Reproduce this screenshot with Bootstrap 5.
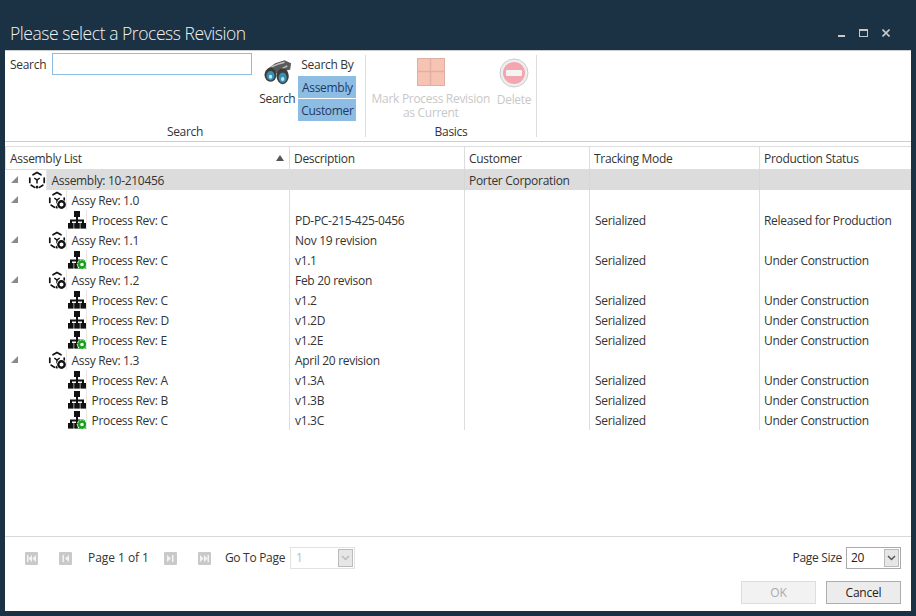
<!DOCTYPE html>
<html lang="en">
<head>
<meta charset="utf-8">
<title>Please select a Process Revision</title>
<link href="https://cdn.jsdelivr.net/npm/bootstrap@5.3.0/dist/css/bootstrap.min.css" rel="stylesheet">
<style>
html,body{height:100%;margin:0}
body{background:#1a3244;font-family:"Open Sans","Noto Sans",sans-serif;font-size:12px;color:#333;overflow:hidden}
.frame{width:916px;height:616px;padding:0 5px 5px}
.titlebar{height:50px;color:#f2f2f2;padding:20px 0 0 5px}
.titlebar h1{font-size:17.5px;font-weight:300;line-height:26px;margin:0;letter-spacing:-.45px}
.winbtns{gap:14px;padding:9px 21px 0 0}
.panel{width:906px;height:561px;background:#fff;border-top:1px solid #ccc}
.ribbon{height:91px;border-bottom:1px solid #ccc;letter-spacing:-.3px}
.sec{height:82px;margin-top:4px;border-right:1px solid #ddd}
.sec1{width:361px}.sec2{width:171px}
.secbody{height:70px;flex:none}
.seclabel{line-height:12px;text-align:center;flex:none;padding-top:1px}
.srchwrap{padding:1px 0 0 5px}
.srch{width:200px;height:22px;border:1px solid #8cbde0;background:#fff;padding:0 4px;margin:-3px 0 0 6px;font:inherit}
.srch:focus{outline:0}
.binwrap{margin-left:7px}
.binocs{margin-top:5px;margin-left:2px}
.bintext{margin-top:5px}
.bywrap{margin-left:3px;padding-top:1px}
.bytitle{margin-bottom:2px}
.toggle{background:#8dbde3;color:#1d3a63;width:58px;height:22px;line-height:24px;text-align:center;margin-bottom:1px}
.muted-label{color:#c8c8c8;line-height:14px;text-align:center}
.marklabel{width:120px}
.basicsbody{padding-top:3px;gap:6px}
.bigicon{margin-bottom:6px}
.delicon{margin-bottom:5px}
.gridarea{height:395px}
.grid{width:906px;table-layout:fixed;border-collapse:collapse;margin:4px 0 0 0;letter-spacing:-.3px}
.c1{width:284px}.c2{width:175px}.c3{width:125px}.c4{width:170px}
.grid th{height:23px;font-weight:400;border:1px solid #ddd;padding:2px 4px 0;background:#fff;position:relative;color:#333}
.grid td{height:20px;padding:2px 5px 0;border-right:1px solid #ddd;white-space:nowrap;line-height:18px;vertical-align:middle}
.grid td.treecell{padding:0}
.grid td:nth-child(3),.grid td:nth-child(5){padding-left:4px}
.grid td:last-child,.grid th:last-child{border-right:0}
.grid tr.sel td:not(.treecell){background:#dcdcdc;border-right-color:#d6d6d6}
.grid tr.sel .lbl{background:#dcdcdc}
.sortup{position:absolute;right:5px;top:8px;width:0;height:0;border:4px solid transparent;border-top:0;border-bottom:6px solid #555}
.tw{width:7px;height:7px;flex:none;margin-left:5px}
.cellin{height:20px;white-space:nowrap}
.ico{flex:none;display:block;box-sizing:content-box}
.icell{height:20px;border-right:1px solid #e6e6e6;flex:none;display:flex;align-items:center}
.i0{margin-left:10px}.i1{margin-left:30px}.i2{margin-left:62px}
.lbl{flex:1 1 auto;height:20px;padding:2px 0 0 5px;line-height:18px}
.pager{height:75px;border-top:1px solid #d8d8d8;letter-spacing:-.3px}
.pagerow{height:41px;padding:0 10px 0 20px}
.pg{width:13px;height:13px;display:block;flex:none;margin-top:1px}
.m16{margin-right:16px}.m15{margin-right:15px}.m21{margin-right:21px}.m14{margin-right:14px}
.pageof{letter-spacing:-.05px}
.combo{height:22px;border:1px solid #e2e2e2;position:relative;display:flex;align-items:center;padding-left:5px;margin-left:4px}
.combo.on{border-color:#aaa;color:#222;width:55px;margin-left:4px;padding-left:4px}
.combo.off{color:#bbb;width:65px;margin-left:5px}
.arrowbox{position:absolute;right:1px;top:1px;bottom:1px;width:15px;background:#e6e6e6;border:1px solid #bbb;display:flex;align-items:center;justify-content:center}
.dlgbtn{width:75px;height:23px;font:inherit;padding:1px 0 0;border-radius:0;letter-spacing:-.2px}
.okb{background:#f2f2f2;border:1px solid #ddd;color:#aaa}
.cancelb{background:#ececec;border:1px solid #adadad;color:#222}
.foot{padding:3px 10px 0 0;gap:10px}
</style>
</head>
<body>
<svg width="0" height="0" class="position-absolute">
<defs>
<g id="cube">
<path d="M5 3.800 9 1.500l4 2.300M1.800 7v4.500M16.200 7v4.500M3.200 14.200 6.600 16.400M14.800 14.200 11.400 16.400" fill="none" stroke="#111" stroke-width="1.700" stroke-linecap="round"/>
<path d="M6.300 7 9 9l2.700-2M9 9v3.500" fill="none" stroke="#111" stroke-width="1.500"/>
<rect x="7.800" y="14.800" width="2.400" height="2.600" fill="#111"/>
</g>
<g id="revb">
<use href="#cube"/>
<circle cx="13.500" cy="13.500" r="5" fill="#fff"/>
<circle cx="13.500" cy="13.500" r="3.200" fill="none" stroke="#111" stroke-width="2.400"/>
</g>
<g id="tree">
<rect x="6" y="0" width="6" height="6" fill="#111"/>
<rect x="8" y="6" width="2" height="6" fill="#111"/>
<rect x="2" y="8.500" width="14" height="2" fill="#111"/>
<rect x="2" y="9" width="2" height="3" fill="#111"/><rect x="14" y="9" width="2" height="3" fill="#111"/>
<rect x="0" y="12" width="5.600" height="5.600" fill="#111"/><rect x="6.200" y="12" width="5.600" height="5.600" fill="#111"/><rect x="12.400" y="12" width="5.600" height="5.600" fill="#111"/>
</g>
<g id="treeg">
<use href="#tree"/>
<circle cx="14" cy="13.500" r="5.200" fill="#fff"/>
<circle cx="14" cy="13.500" r="3" fill="none" stroke="#16a016" stroke-width="2.400"/>
<circle cx="14" cy="13.500" r="4.400" fill="none" stroke="#16a016" stroke-width="1.300" stroke-dasharray="1.500 1.260"/>
</g>
<path id="twist" d="M7 0v7H0z" fill="#8a8a8a"/>
<path id="chev" d="M1 1l3.500 3.500L8 1" fill="none" stroke-width="1.500"/>
</defs>
</svg>
<div class="frame d-flex flex-column">
  <div class="titlebar d-flex justify-content-between align-items-start">
    <h1>Please select a Process Revision</h1>
    <div class="winbtns d-flex align-items-center">
      <svg width="7" height="8" viewBox="0 0 7 8"><rect y="6" width="7" height="2" fill="#c8c8c8"/></svg>
      <svg width="9" height="8" viewBox="0 0 9 8"><rect x=".5" y=".5" width="8" height="7" fill="none" stroke="#c8c8c8"/><rect width="9" height="2" fill="#c8c8c8"/></svg>
      <svg width="8" height="8" viewBox="0 0 8 8"><path d="M.5.5l7 7M7.500.5l-7 7" stroke="#c8c8c8" stroke-width="1.600"/></svg>
    </div>
  </div>
  <div class="panel d-flex flex-column">
    <div class="ribbon d-flex">
      <div class="sec sec1 d-flex flex-column">
        <div class="secbody d-flex">
          <div class="srchwrap d-flex align-items-start"><label for="q" class="mb-0">Search</label><input id="q" class="srch" type="text"></div>
          <div class="binwrap d-flex flex-column align-items-center">
            <svg class="ico binocs" width="28" height="25" viewBox="0 0 30 26">
              <path d="M4 9 12 3l10-3 7 3-1 7-6 1-4 2-7 1z" fill="#5a5a5a"/>
              <path d="M8 7l7-3 7-2M19 9l6-3" stroke="#c4c4c4" stroke-width="1.500" fill="none"/>
              <ellipse cx="7" cy="15.500" rx="6.500" ry="7.500" fill="#3c3c3c"/>
              <ellipse cx="7" cy="16.500" rx="4.300" ry="5" fill="#3790b4"/>
              <ellipse cx="20" cy="17" rx="6.500" ry="8.500" fill="#3c3c3c"/>
              <ellipse cx="20" cy="18.500" rx="4.300" ry="5.500" fill="#3790b4"/>
              <ellipse cx="7" cy="17.500" rx="1.800" ry="2.200" fill="#bfe6f2"/><ellipse cx="20" cy="20" rx="1.800" ry="2.200" fill="#bfe6f2"/>
            </svg>
            <span class="bintext">Search</span>
          </div>
          <div class="bywrap d-flex flex-column align-items-center">
            <span class="bytitle">Search By</span>
            <div class="toggle">Assembly</div>
            <div class="toggle">Customer</div>
          </div>
        </div>
        <div class="seclabel">Search</div>
      </div>
      <div class="sec sec2 d-flex flex-column">
        <div class="secbody basicsbody d-flex justify-content-center">
          <div class="d-flex flex-column align-items-center">
            <svg class="ico bigicon" width="28" height="28" viewBox="0 0 28 28"><rect width="28" height="28" fill="#f7c4b4"/><path d="M13.500 0v28M0 13.500h28" stroke="#e0b0a0" stroke-width="1.500"/><rect x=".5" y=".5" width="27" height="27" fill="none" stroke="#dcb0a4"/></svg>
            <div class="muted-label marklabel">Mark Process Revision as Current</div>
          </div>
          <div class="d-flex flex-column align-items-center">
            <svg class="ico delicon" width="30" height="30" viewBox="0 0 30 30"><circle cx="15" cy="15" r="14" fill="#eee" stroke="#ccc"/><circle cx="15" cy="15" r="11" fill="#f2a7b0"/><rect x="7" y="12" width="16" height="6" rx="1" fill="#f4f4f4"/></svg>
            <div class="muted-label">Delete</div>
          </div>
        </div>
        <div class="seclabel">Basics</div>
      </div>
    </div>
    <div class="gridarea">
      <table class="grid">
        <colgroup><col class="c1"><col class="c2"><col class="c3"><col class="c4"><col></colgroup>
        <thead><tr><th>Assembly List<span class="sortup"></span></th><th>Description</th><th>Customer</th><th>Tracking Mode</th><th>Production Status</th></tr></thead>
        <tbody>
          <tr class="sel"><td class="treecell"><div class="cellin d-flex align-items-center"><svg class="tw" viewBox="0 0 7 7"><use href="#twist"/></svg><span class="icell i0"><svg class="ico" width="18" height="18" viewBox="0 0 18 18"><use href="#cube"/></svg></span><span class="lbl">Assembly: 10-210456</span></div></td><td></td><td>Porter Corporation</td><td></td><td></td></tr>
          <tr><td class="treecell"><div class="cellin d-flex align-items-center"><svg class="tw" viewBox="0 0 7 7"><use href="#twist"/></svg><span class="icell i1"><svg class="ico" width="18" height="18" viewBox="0 0 18 18"><use href="#revb"/></svg></span><span class="lbl">Assy Rev: 1.0</span></div></td><td></td><td></td><td></td><td></td></tr>
          <tr><td class="treecell"><div class="cellin d-flex align-items-center"><span class="icell i2"><svg class="ico" width="18" height="18" viewBox="0 0 18 18"><use href="#tree"/></svg></span><span class="lbl">Process Rev: C</span></div></td><td>PD-PC-215-425-0456</td><td></td><td>Serialized</td><td>Released for Production</td></tr>
          <tr><td class="treecell"><div class="cellin d-flex align-items-center"><svg class="tw" viewBox="0 0 7 7"><use href="#twist"/></svg><span class="icell i1"><svg class="ico" width="18" height="18" viewBox="0 0 18 18"><use href="#revb"/></svg></span><span class="lbl">Assy Rev: 1.1</span></div></td><td>Nov 19 revision</td><td></td><td></td><td></td></tr>
          <tr><td class="treecell"><div class="cellin d-flex align-items-center"><span class="icell i2"><svg class="ico" width="18" height="18" viewBox="0 0 18 18"><use href="#treeg"/></svg></span><span class="lbl">Process Rev: C</span></div></td><td>v1.1</td><td></td><td>Serialized</td><td>Under Construction</td></tr>
          <tr><td class="treecell"><div class="cellin d-flex align-items-center"><svg class="tw" viewBox="0 0 7 7"><use href="#twist"/></svg><span class="icell i1"><svg class="ico" width="18" height="18" viewBox="0 0 18 18"><use href="#revb"/></svg></span><span class="lbl">Assy Rev: 1.2</span></div></td><td>Feb 20 revison</td><td></td><td></td><td></td></tr>
          <tr><td class="treecell"><div class="cellin d-flex align-items-center"><span class="icell i2"><svg class="ico" width="18" height="18" viewBox="0 0 18 18"><use href="#tree"/></svg></span><span class="lbl">Process Rev: C</span></div></td><td>v1.2</td><td></td><td>Serialized</td><td>Under Construction</td></tr>
          <tr><td class="treecell"><div class="cellin d-flex align-items-center"><span class="icell i2"><svg class="ico" width="18" height="18" viewBox="0 0 18 18"><use href="#tree"/></svg></span><span class="lbl">Process Rev: D</span></div></td><td>v1.2D</td><td></td><td>Serialized</td><td>Under Construction</td></tr>
          <tr><td class="treecell"><div class="cellin d-flex align-items-center"><span class="icell i2"><svg class="ico" width="18" height="18" viewBox="0 0 18 18"><use href="#treeg"/></svg></span><span class="lbl">Process Rev: E</span></div></td><td>v1.2E</td><td></td><td>Serialized</td><td>Under Construction</td></tr>
          <tr><td class="treecell"><div class="cellin d-flex align-items-center"><svg class="tw" viewBox="0 0 7 7"><use href="#twist"/></svg><span class="icell i1"><svg class="ico" width="18" height="18" viewBox="0 0 18 18"><use href="#revb"/></svg></span><span class="lbl">Assy Rev: 1.3</span></div></td><td>April 20 revision</td><td></td><td></td><td></td></tr>
          <tr><td class="treecell"><div class="cellin d-flex align-items-center"><span class="icell i2"><svg class="ico" width="18" height="18" viewBox="0 0 18 18"><use href="#tree"/></svg></span><span class="lbl">Process Rev: A</span></div></td><td>v1.3A</td><td></td><td>Serialized</td><td>Under Construction</td></tr>
          <tr><td class="treecell"><div class="cellin d-flex align-items-center"><span class="icell i2"><svg class="ico" width="18" height="18" viewBox="0 0 18 18"><use href="#tree"/></svg></span><span class="lbl">Process Rev: B</span></div></td><td>v1.3B</td><td></td><td>Serialized</td><td>Under Construction</td></tr>
          <tr><td class="treecell"><div class="cellin d-flex align-items-center"><span class="icell i2"><svg class="ico" width="18" height="18" viewBox="0 0 18 18"><use href="#treeg"/></svg></span><span class="lbl">Process Rev: C</span></div></td><td>v1.3C</td><td></td><td>Serialized</td><td>Under Construction</td></tr>
        </tbody>
      </table>
    </div>
    <div class="pager">
      <div class="pagerow d-flex align-items-center">
        <svg class="pg m21" viewBox="0 0 13 13"><rect width="13" height="13" rx="1" fill="#c9c9c9"/><path d="M2 3h1.500v7H2zM7 3v7L3.500 6.500zM11 3v7L7.500 6.500z" fill="#f4f4f4"/></svg>
        <svg class="pg m16" viewBox="0 0 13 13"><rect width="13" height="13" rx="1" fill="#c9c9c9"/><path d="M3.500 3H5v7H3.500zM10 3v7L6 6.500z" fill="#f4f4f4"/></svg>
        <span class="pageof m15">Page 1 of 1</span>
        <svg class="pg m21" viewBox="0 0 13 13"><rect width="13" height="13" rx="1" fill="#c9c9c9"/><path d="M3 3v7l4-3.500zM8 3h1.500v7H8z" fill="#f4f4f4"/></svg>
        <svg class="pg m14" viewBox="0 0 13 13"><rect width="13" height="13" rx="1" fill="#c9c9c9"/><path d="M2 3v7l3.500-3.500zM6 3v7l3.500-3.500zM9.500 3H11v7H9.500z" fill="#f4f4f4"/></svg>
        <span>Go To Page</span>
        <div class="combo off">1<span class="arrowbox"><svg width="9" height="6" viewBox="0 0 9 6" stroke="#bbb"><use href="#chev"/></svg></span></div>
        <span class="ms-auto">Page Size</span>
        <div class="combo on">20<span class="arrowbox"><svg width="9" height="6" viewBox="0 0 9 6" stroke="#555"><use href="#chev"/></svg></span></div>
      </div>
      <div class="foot d-flex justify-content-end">
        <button class="dlgbtn okb" disabled>OK</button>
        <button class="dlgbtn cancelb">Cancel</button>
      </div>
    </div>
  </div>
</div>
</body>
</html>
